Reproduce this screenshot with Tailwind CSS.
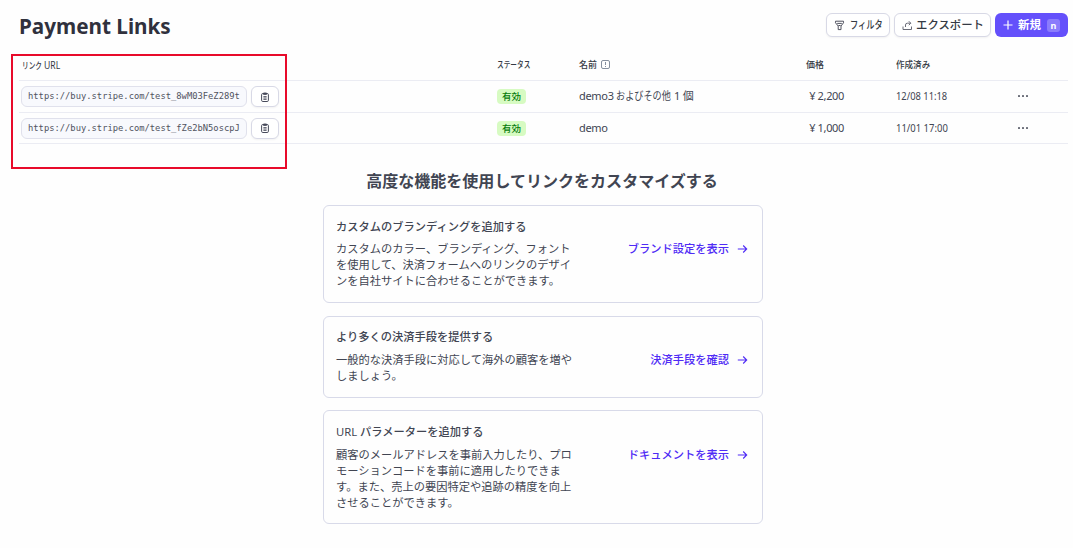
<!DOCTYPE html>
<html lang="ja">
<head>
<meta charset="utf-8">
<title>Payment Links</title>
<script src="https://cdn.jsdelivr.net/npm/@tailwindcss/browser@4"></script>
</head>
<body class="relative h-[548px] w-[1073px] overflow-hidden bg-[#fefefe] font-['Noto_Sans','Noto_Sans_CJK_JP',sans-serif] text-[11px] leading-4 text-[#414552] whitespace-nowrap">

<header class="flex h-[50px] items-center justify-between pl-[19px] pr-[5px]">
  <h1 class="text-[22px] font-bold leading-7 text-[#30313d]"><span class="inline-block origin-left scale-x-[0.94]">Payment Links</span></h1>
  <div class="flex gap-1 font-semibold text-[#353a44]">
    <button class="flex h-6 w-16 items-center rounded-md border border-[#d8d9e6] bg-white pl-[7px] shadow-xs">
      <svg class="mr-[5px] size-[11px] shrink-0" viewBox="0 0 11 11" fill="none" stroke="#50525f" stroke-linejoin="round"><path d="M1.5 1.2h8v1.6L7 6v3.6H4.2V6L1.5 2.8zM3.2 3.4h4.6M4.4 5.5h2.2"/></svg>
      <span class="w-9 text-left"><span class="inline-block origin-left scale-x-[0.75] font-medium">フィルタ</span></span>
    </button>
    <button class="flex h-6 w-[97px] items-center rounded-md border border-[#d8d9e6] bg-white pl-[7px] shadow-xs">
      <svg class="mr-[3px] size-[11px] shrink-0" viewBox="0 0 11 11" fill="none" stroke="#6a6c78" stroke-linejoin="round"><path d="M1 6.5v3h8.5v-3M3.5 7V5q0-1.8 1.8-1.8h3.4M6.8 1.2l2 2-2 2"/></svg>
      <span class="text-[11.4px] font-medium">エクスポート</span>
    </button>
    <button class="flex h-6 w-[73px] items-center rounded-md bg-[#6450fb] pl-2 text-white">
      <svg class="mr-[5px] size-[10px] shrink-0" viewBox="0 0 10 10" fill="none" stroke="currentColor" stroke-width="1.2"><path d="M5 .5v9M.5 5h9"/></svg>
      <span class="text-[11.5px] font-bold">新規</span>
      <span class="ml-[6px] grid h-[13px] w-[13px] place-items-center rounded-[3px] bg-white/25 text-[9px] font-bold leading-none">n</span>
    </button>
  </div>
</header>

<main>
  <section class="ml-[19px] w-[1049px]">
    <div class="grid h-[31px] grid-cols-[478px_82px_227px_90px_119px_1fr] items-center border-b border-[#ebecf3] text-[9px] font-medium text-[#353a44]">
      <div class="pl-[3px]"><span class="inline-block origin-left scale-x-[0.74]">リンク</span><span class="-ml-[5px] inline-block origin-left scale-x-[0.86] text-[10px] font-normal">URL</span></div>
      <div><span class="inline-block origin-left scale-x-[0.74]">ステータス</span></div>
      <div class="flex items-center gap-1">名前
        <svg class="-mt-px size-[9px]" viewBox="0 0 9 9" fill="none" stroke="#87909f"><rect x=".5" y=".5" width="8" height="8" rx="1.5"/><path d="M4.5 2v3M4.5 6v1"/></svg>
      </div>
      <div>価格</div>
      <div><span class="inline-block origin-left scale-x-[0.95]">作成済み</span></div>
      <div></div>
    </div>

    <div class="grid h-8 grid-cols-[478px_82px_227px_90px_119px_1fr] items-center border-b border-[#ebecf3]">
      <div class="flex gap-1 pl-[2px]">
        <div class="h-[21px] w-[226px] rounded-md border border-[#e0e1ec] bg-[#f8f9fd] pl-1.5 font-['DejaVu_Sans_Mono',monospace] text-[8.8px] leading-[18px] text-[#50535f]">https://buy.stripe.com/test_8wM03FeZ289t</div>
        <button class="grid h-[21px] w-[28px] place-items-center rounded-md border border-[#d8d9e6] bg-white shadow-xs"><svg class="h-[10px] w-[8px]" viewBox="0 0 8 10" fill="none" stroke="#474a5a"><rect x=".6" y="1.5" width="6.8" height="8" rx="1.2"/><path d="M2.5 1h3v1.5h-3zM2.4 4.6h3.2M2.4 6h3.2M2.4 7.4h3.2" stroke-width=".9"/></svg></button>
      </div>
      <div><span class="block h-[15px] w-[29px] rounded bg-[#d7fbc2] text-center text-[9.5px] font-medium leading-[15px] text-[#057a0b]">有効</span></div>
      <div class="pb-px whitespace-pre"><span class="tracking-[-0.3px]">demo3 </span><span class="inline-block w-[55px]"><span class="inline-block origin-left scale-x-[0.83]">およびその他</span></span><span class="tracking-[-0.2px]"> 1 個</span></div>
      <div class="pb-px pr-[52px] text-right tracking-[-0.35px]">¥ 2,200</div>
      <div class="pb-px"><span class="inline-block origin-left scale-x-[0.85]">12/08 11:18</span></div>
      <div class="flex gap-[2px] pb-px pl-[3px]"><i class="size-[2px] rounded-[0.5px] bg-[#6a6d78]"></i><i class="size-[2px] rounded-[0.5px] bg-[#6a6d78]"></i><i class="size-[2px] rounded-[0.5px] bg-[#6a6d78]"></i></div>
    </div>

    <div class="grid h-[31px] grid-cols-[478px_82px_227px_90px_119px_1fr] items-center border-b border-[#ebecf3]">
      <div class="flex gap-1 pl-[2px]">
        <div class="h-[21px] w-[226px] rounded-md border border-[#e0e1ec] bg-[#f8f9fd] pl-1.5 font-['DejaVu_Sans_Mono',monospace] text-[8.8px] leading-[18px] text-[#50535f]">https://buy.stripe.com/test_fZe2bN5oscpJ</div>
        <button class="grid h-[21px] w-[28px] place-items-center rounded-md border border-[#d8d9e6] bg-white shadow-xs"><svg class="h-[10px] w-[8px]" viewBox="0 0 8 10" fill="none" stroke="#474a5a"><rect x=".6" y="1.5" width="6.8" height="8" rx="1.2"/><path d="M2.5 1h3v1.5h-3zM2.4 4.6h3.2M2.4 6h3.2M2.4 7.4h3.2" stroke-width=".9"/></svg></button>
      </div>
      <div><span class="block h-[15px] w-[29px] rounded bg-[#d7fbc2] text-center text-[9.5px] font-medium leading-[15px] text-[#057a0b]">有効</span></div>
      <div class="tracking-[-0.3px]">demo</div>
      <div class="pr-[52px] text-right tracking-[-0.35px]">¥ 1,000</div>
      <div><span class="inline-block origin-left scale-x-[0.86]">11/01 17:00</span></div>
      <div class="flex gap-[2px] pl-[3px]"><i class="size-[2px] rounded-[0.5px] bg-[#6a6d78]"></i><i class="size-[2px] rounded-[0.5px] bg-[#6a6d78]"></i><i class="size-[2px] rounded-[0.5px] bg-[#6a6d78]"></i></div>
    </div>
  </section>

  <section class="ml-[323px] w-[440px] pt-[25px] text-[11.25px]">
    <h2 class="mb-3 text-center text-[16.05px] font-bold leading-6"><span class="relative -left-px">高度な機能を使用してリンクをカスタマイズする</span></h2>

    <article class="mb-[13px] h-[98px] rounded-md border border-[#d8dae9] pl-3 pr-[14px] pt-[13px]">
      <h3 class="mb-1.5 font-medium">カスタムのブランディングを追加する</h3>
      <div class="flex justify-between">
        <p>カスタムのカラー、ブランディング、フォント<br>を使用して、決済フォームへのリンクのデザイ<br>ンを自社サイトに合わせることができます。</p>
        <a class="flex h-4 items-center gap-2 font-medium text-[#4f2bf5]">ブランド設定を表示<svg class="size-[11px]" viewBox="0 0 11 11" fill="none" stroke="currentColor" stroke-width="1.1"><path d="M.8 5h9M6.2 1.5L9.7 5 6.2 8.5"/></svg></a>
      </div>
    </article>

    <article class="mb-3 h-[82px] rounded-md border border-[#d8dae9] pl-3 pr-[14px] pt-3">
      <h3 class="mb-[7px] font-medium">より多くの決済手段を提供する</h3>
      <div class="flex justify-between">
        <p>一般的な決済手段に対応して海外の顧客を増や<br>しましょう。</p>
        <a class="flex h-4 items-center gap-2 font-medium text-[#4f2bf5]">決済手段を確認<svg class="size-[11px]" viewBox="0 0 11 11" fill="none" stroke="currentColor" stroke-width="1.1"><path d="M.8 5h9M6.2 1.5L9.7 5 6.2 8.5"/></svg></a>
      </div>
    </article>

    <article class="h-[114px] rounded-md border border-[#d8dae9] pl-3 pr-[14px] pt-[13px]">
      <h3 class="mb-[7px] font-medium"><span class="font-normal">URL</span> パラメーターを追加する</h3>
      <div class="flex justify-between">
        <p>顧客のメールアドレスを事前入力したり、プロ<br>モーションコードを事前に適用したりできま<br>す。また、売上の要因特定や追跡の精度を向上<br>させることができます。</p>
        <a class="flex h-4 items-center gap-2 font-medium text-[#4f2bf5]">ドキュメントを表示<svg class="size-[11px]" viewBox="0 0 11 11" fill="none" stroke="currentColor" stroke-width="1.1"><path d="M.8 5h9M6.2 1.5L9.7 5 6.2 8.5"/></svg></a>
      </div>
    </article>
  </section>
</main>

<div class="absolute left-[11px] top-[54px] h-[115px] w-[276px] border-2 border-[#e80a2a]"></div>
</body>
</html>
